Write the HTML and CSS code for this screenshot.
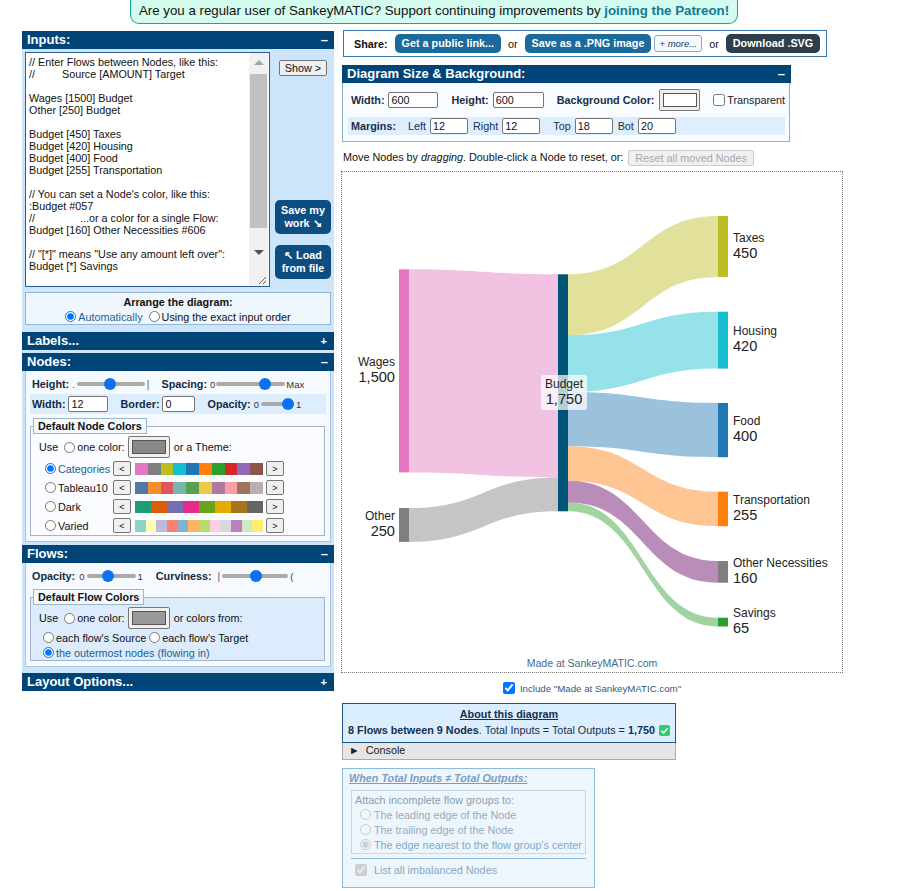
FILE: index.html
```html
<!DOCTYPE html>
<html lang="en">
<head>
<meta charset="utf-8">
<title>SankeyMATIC</title>
<link rel="stylesheet" href="styles.css">
</head>
<body>
<div class="page">
  <div class="banner">Are you a regular user of SankeyMATIC? Support continuing improvements by <a class="patreon" href="#">joining the Patreon!</a></div>
  <div class="main">
    <div class="left">
      <section class="sec">
        <div class="hdr"><span>Inputs:</span><span class="tog">–</span></div>
        <div class="inputs-body">
          <div class="inputs-row">
            <div class="ta">
              <div class="ta-text">// Enter Flows between Nodes, like this:
//         Source [AMOUNT] Target

Wages [1500] Budget
Other [250] Budget

Budget [450] Taxes
Budget [420] Housing
Budget [400] Food
Budget [255] Transportation

// You can set a Node's color, like this:
:Budget #057
//               ...or a color for a single Flow:
Budget [160] Other Necessities #606

// "[*]" means "Use any amount left over":
Budget [*] Savings</div>
              <div class="sb">
                <span class="sb-btn"><span class="tri-up"></span></span>
                <span class="sb-thumb"></span>
                <span class="sb-fill"></span>
                <span class="sb-btn"><span class="tri-down"></span></span>
                <span class="sb-corner">
                  <svg width="10" height="10" viewBox="0 0 10 10"><path d="M9 2 L2 9 M9 6 L6 9" stroke="#666" stroke-width="1" fill="none"/></svg>
                </span>
              </div>
            </div>
            <div class="ta-side">
              <button class="btn-show">Show &gt;</button>
              <span class="side-fill"></span>
              <button class="btn-dark">Save my<br>work ↘</button>
              <button class="btn-dark">↖ Load<br>from file</button>
            </div>
          </div>
          <div class="arrange">
            <div class="arrange-title">Arrange the diagram:</div>
            <div class="arrange-opts">
              <label class="opt sel"><input class="rad" type="radio" name="arr" checked>Automatically</label>
              <label class="opt"><input class="rad" type="radio" name="arr">Using the exact input order</label>
            </div>
          </div>
        </div>
      </section>

      <section class="sec">
        <div class="hdr"><span>Labels...</span><span class="tog plus">+</span></div>
      </section>

      <section class="sec">
        <div class="hdr"><span>Nodes:</span><span class="tog">–</span></div>
        <div class="box nodes-box">
          <div class="nrow">
            <b class="lbl">Height:</b><span class="tiny dot">.</span>
            <input class="rng w68" type="range" min="0" max="100" value="48">
            <span class="tiny bar">|</span>
            <b class="lbl ml12">Spacing:</b><span class="tiny ml3">0</span>
            <input class="rng w69 tight" type="range" min="0" max="100" value="74">
            <span class="tiny">Max</span>
          </div>
          <div class="strip">
            <b class="lbl">Width:</b><input class="txt w40" type="text" value="12">
            <b class="lbl ml12">Border:</b><input class="txt w33" type="text" value="0">
            <b class="lbl ml12">Opacity:</b><span class="tiny ml3">0</span>
            <input class="rng w33" type="range" min="0" max="100" value="100">
            <span class="tiny">1</span>
          </div>
          <fieldset class="fs fs-nodes">
            <legend>Default Node Colors</legend>
            <div class="use-row">
              <span>Use</span>
              <label class="opt ml6"><input class="rad" type="radio" name="nc">one color:</label>
              <span class="swatch-btn"><span class="swatch-in"></span></span>
              <span>or a Theme:</span>
            </div>
            <div class="theme">
              <label class="opt tname sel"><input class="rad" type="radio" name="nc" checked>Categories</label>
              <span class="arr-btn">&lt;</span>
              <span class="strip-c">
                <i style="background:#e377c2"></i><i style="background:#7f7f7f"></i><i style="background:#bcbd22"></i><i style="background:#17becf"></i><i style="background:#1f77b4"></i><i style="background:#ff7f0e"></i><i style="background:#2ca02c"></i><i style="background:#d62728"></i><i style="background:#9467bd"></i><i style="background:#8c564b"></i>
              </span>
              <span class="arr-btn">&gt;</span>
            </div>
            <div class="theme">
              <label class="opt tname"><input class="rad" type="radio" name="nc">Tableau10</label>
              <span class="arr-btn">&lt;</span>
              <span class="strip-c">
                <i style="background:#4e79a7"></i><i style="background:#f28e2c"></i><i style="background:#e15759"></i><i style="background:#76b7b2"></i><i style="background:#59a14f"></i><i style="background:#edc949"></i><i style="background:#af7aa1"></i><i style="background:#ff9da7"></i><i style="background:#9c755f"></i><i style="background:#bab0ab"></i>
              </span>
              <span class="arr-btn">&gt;</span>
            </div>
            <div class="theme">
              <label class="opt tname"><input class="rad" type="radio" name="nc">Dark</label>
              <span class="arr-btn">&lt;</span>
              <span class="strip-c">
                <i style="background:#1b9e77"></i><i style="background:#d95f02"></i><i style="background:#7570b3"></i><i style="background:#e7298a"></i><i style="background:#66a61e"></i><i style="background:#e6ab02"></i><i style="background:#a6761d"></i><i style="background:#666666"></i>
              </span>
              <span class="arr-btn">&gt;</span>
            </div>
            <div class="theme">
              <label class="opt tname"><input class="rad" type="radio" name="nc">Varied</label>
              <span class="arr-btn">&lt;</span>
              <span class="strip-c">
                <i style="background:#8dd3c7"></i><i style="background:#ffffb3"></i><i style="background:#bebada"></i><i style="background:#fb8072"></i><i style="background:#80b1d3"></i><i style="background:#fdb462"></i><i style="background:#b3de69"></i><i style="background:#fccde5"></i><i style="background:#d9d9d9"></i><i style="background:#bc80bd"></i><i style="background:#ccebc5"></i><i style="background:#ffed6f"></i>
              </span>
              <span class="arr-btn">&gt;</span>
            </div>
          </fieldset>
        </div>
      </section>

      <section class="sec">
        <div class="hdr"><span>Flows:</span><span class="tog">–</span></div>
        <div class="box flows-box">
          <div class="nrow">
            <b class="lbl">Opacity:</b><span class="tiny ml4">0</span>
            <input class="rng w49" type="range" min="0" max="100" value="43">
            <span class="tiny">1</span>
            <b class="lbl ml13">Curviness:</b><span class="tiny bar ml6">|</span>
            <input class="rng w66" type="range" min="0" max="100" value="52">
            <span class="tiny">(</span>
          </div>
          <fieldset class="fs fs-flows">
            <legend>Default Flow Colors</legend>
            <div class="use-row">
              <span>Use</span>
              <label class="opt ml6"><input class="rad" type="radio" name="fc">one color:</label>
              <span class="swatch-btn"><span class="swatch-in lite"></span></span>
              <span>or colors from:</span>
            </div>
            <div class="frow">
              <label class="opt"><input class="rad" type="radio" name="fc">each flow's Source</label>
              <label class="opt ml3"><input class="rad" type="radio" name="fc">each flow's Target</label>
            </div>
            <div class="frow">
              <label class="opt sel"><input class="rad" type="radio" name="fc" checked>the outermost nodes (flowing in)</label>
            </div>
          </fieldset>
        </div>
      </section>

      <section class="sec">
        <div class="hdr"><span>Layout Options...</span><span class="tog plus">+</span></div>
      </section>
    </div>

    <div class="right">
      <div class="share">
        <b class="share-lbl">Share:</b>
        <span class="pill blue">Get a public link...</span>
        <span class="or">or</span>
        <span class="pill blue">Save as a .PNG image</span>
        <span class="more">+ <i>more...</i></span>
        <span class="or">or</span>
        <span class="pill slate">Download .SVG</span>
      </div>

      <section class="dsize">
        <div class="hdr"><span>Diagram Size &amp; Background:</span><span class="tog">–</span></div>
        <div class="dbody">
          <div class="drow">
            <b class="dl">Width:</b><input class="txt w50" type="text" value="600">
            <b class="dl ml13">Height:</b><input class="txt w51" type="text" value="600">
            <b class="dl ml13">Background Color:</b>
            <span class="swatch-btn bgc"><span class="swatch-in white"></span></span>
            <label class="chk-lbl ml13"><input class="chk" type="checkbox">Transparent</label>
          </div>
          <div class="mrow">
            <b class="dl">Margins:</b>
            <span class="ml12">Left</span><input class="txt w38" type="text" value="12">
            <span class="ml5">Right</span><input class="txt w38" type="text" value="12">
            <span class="ml13">Top</span><input class="txt w38" type="text" value="18">
            <span class="ml5">Bot</span><input class="txt w38" type="text" value="20">
          </div>
        </div>
      </section>

      <div class="move">Move Nodes by <i>dragging</i>. Double-click a Node to reset, or: <span class="reset">Reset all moved Nodes</span></div>

      <div class="chart">
        <svg width="500" height="500" viewBox="342 171 500 500">
          <g class="flows">
            <path fill="#e377c2" d="M409,268.3 C483.5,268.3 483.5,273.3 558,273.3 L558,476.4 C483.5,476.4 483.5,471.4 409,471.4 Z"/>
            <path fill="#7f7f7f" d="M409,507 C483.5,507 483.5,476.4 558,476.4 L558,510.3 C483.5,510.3 483.5,540.9 409,540.9 Z"/>
            <path fill="#bcbd22" d="M568,273.3 C643,273.3 643,215 718,215 L718,275.9 C643,275.9 643,334.2 568,334.2 Z"/>
            <path fill="#17becf" d="M568,334.2 C643,334.2 643,310.7 718,310.7 L718,367.6 C643,367.6 643,391.1 568,391.1 Z"/>
            <path fill="#1f77b4" d="M568,391.1 C643,391.1 643,402 718,402 L718,456.2 C643,456.2 643,445.3 568,445.3 Z"/>
            <path fill="#ff7f0e" d="M568,445.3 C643,445.3 643,490.7 718,490.7 L718,525.2 C643,525.2 643,479.8 568,479.8 Z"/>
            <path fill="#660066" d="M568,479.8 C643,479.8 643,560 718,560 L718,581.7 C643,581.7 643,501.5 568,501.5 Z"/>
            <path fill="#2ca02c" d="M568,501.5 C643,501.5 643,616.7 718,616.7 L718,625.5 C643,625.5 643,510.3 568,510.3 Z"/>
          </g>
          <rect x="399" y="268.3" width="10" height="203.1" fill="#e377c2"/>
          <rect x="399" y="507" width="10" height="33.9" fill="#7f7f7f"/>
          <rect x="558" y="273.3" width="10" height="237" fill="#005577"/>
          <rect x="718" y="215" width="10" height="60.9" fill="#bcbd22"/>
          <rect x="718" y="310.7" width="10" height="56.9" fill="#17becf"/>
          <rect x="718" y="402" width="10" height="54.2" fill="#1f77b4"/>
          <rect x="718" y="490.7" width="10" height="34.5" fill="#ff7f0e"/>
          <rect x="718" y="560" width="10" height="21.7" fill="#7f7f7f"/>
          <rect x="718" y="616.7" width="10" height="8.8" fill="#2ca02c"/>
          <rect x="541" y="374" width="46" height="35" rx="3" fill="#ffffff" fill-opacity="0.72"/>
          <g class="lab">
            <text x="395" y="364.5" text-anchor="end">Wages</text>
            <text class="val" x="395" y="380.5" text-anchor="end">1,500</text>
            <text x="395" y="519" text-anchor="end">Other</text>
            <text class="val" x="395" y="535" text-anchor="end">250</text>
            <text x="564" y="387" text-anchor="middle">Budget</text>
            <text class="val" x="564" y="403" text-anchor="middle">1,750</text>
            <text x="733" y="240.5">Taxes</text>
            <text class="val" x="733" y="256.5">450</text>
            <text x="733" y="334">Housing</text>
            <text class="val" x="733" y="350">420</text>
            <text x="733" y="424">Food</text>
            <text class="val" x="733" y="440">400</text>
            <text x="733" y="503">Transportation</text>
            <text class="val" x="733" y="519">255</text>
            <text x="733" y="566">Other Necessities</text>
            <text class="val" x="733" y="582">160</text>
            <text x="733" y="616">Savings</text>
            <text class="val" x="733" y="632">65</text>
          </g>
          <text class="made" x="592" y="666" text-anchor="middle">Made at SankeyMATIC.com</text>
        </svg>
      </div>

      <div class="include"><label class="inc-lbl"><input class="chk" type="checkbox" checked>Include "Made at SankeyMATIC.com"</label></div>

      <div class="about">
        <div class="about-title">About this diagram</div>
        <div class="about-line"><b>8 Flows between 9 Nodes</b>. Total Inputs = Total Outputs = <b>1,750</b> <span class="ok"><svg width="9" height="9" viewBox="0 0 9 9"><path d="M1.5 4.8 L3.6 6.8 L7.6 2.3" stroke="#fff" stroke-width="1.6" fill="none"/></svg></span></div>
      </div>
      <div class="console">► &nbsp;Console</div>

      <div class="when">
        <div class="when-title">When Total Inputs ≠ Total Outputs:</div>
        <div class="when-box">
          <div class="wl">Attach incomplete flow groups to:</div>
          <label class="wl wopt"><input class="rad" type="radio" name="att" disabled>The leading edge of the Node</label>
          <label class="wl wopt"><input class="rad" type="radio" name="att" disabled>The trailing edge of the Node</label>
          <label class="wl wopt wsel"><input class="rad" type="radio" name="att" checked disabled>The edge nearest to the flow group's center</label>
        </div>
        <div class="when-hr"></div>
        <label class="wl wchk"><input class="chk" type="checkbox" checked disabled>List all imbalanced Nodes</label>
      </div>
    </div>
  </div>
</div>
</body>
</html>
```

FILE: styles.css
```css
* { box-sizing: border-box; }
body {
  margin: 0;
  font-family: "Liberation Sans", Arial, sans-serif;
  font-size: 10.8px;
  color: #111;
  background: #fff;
}
.page { width: 824px; margin-left: 22px; }

/* banner */
.banner {
  width: max-content;
  margin: 0 auto;
  background: #d3fcee;
  border: 1px solid #19a88e;
  border-top: none;
  border-radius: 0 0 9px 9px;
  padding: 3px 8px 4px;
  font-size: 13.3px;
  line-height: 16px;
  color: #111;
}
.patreon { color: #13799a; font-weight: bold; text-decoration: none; }

.main { display: flex; gap: 7px; margin-top: 6px; align-items: flex-start; }

/* left column */
.left {
  width: 312px;
  margin-top: 1px;
  background: #cde5fb;
  display: flex;
  flex-direction: column;
  gap: 3px;
}
.hdr {
  background: #004478;
  color: #fff;
  font-weight: bold;
  font-size: 13px;
  height: 18px;
  line-height: 18px;
  padding: 0 6px 0 5px;
  display: flex;
  justify-content: space-between;
}
.tog { font-weight: bold; }
.tog.plus { font-size: 11px; padding-right: 1px; }

.inputs-body { padding: 3px 3px 4px 3px; }
.inputs-row { display: flex; }
.ta {
  width: 245px;
  height: 235px;
  border: 1px solid #2c5d89;
  background: #fff;
  display: flex;
}
.ta-text {
  flex: 1;
  white-space: pre;
  overflow: hidden;
  padding: 3px 3px;
  line-height: 12px;
  font-size: 10.8px;
  color: #111;
}
.sb {
  width: 19px;
  margin-right: 1px;
  background: #f1f1f1;
  display: flex;
  flex-direction: column;
  align-items: center;
}
.sb-btn { height: 19px; width: 19px; display: flex; align-items: center; justify-content: center; }
.tri-up { width: 0; height: 0; border-left: 5px solid transparent; border-right: 5px solid transparent; border-bottom: 5px solid #a3a3a3; }
.tri-down { width: 0; height: 0; border-left: 5px solid transparent; border-right: 5px solid transparent; border-top: 5px solid #505050; }
.sb-thumb { width: 17px; height: 154px; margin-top: 2px; background: #c1c1c1; }
.sb-fill { flex: 1; }
.sb-corner { height: 24px; width: 19px; display: flex; align-items: flex-end; justify-content: flex-end; padding: 0 1px 1px 0; }

.ta-side {
  width: 56px;
  margin-left: 5px;
  display: flex;
  flex-direction: column;
  align-items: center;
  padding: 8px 0 8px;
}
.side-fill { flex: 1; }
.btn-show {
  width: 48px; height: 16px;
  font: 10.8px "Liberation Sans", Arial, sans-serif;
  color: #111;
  background: #efefef;
  border: 1px solid #767676;
  border-radius: 2px;
  padding: 0;
}
.btn-dark {
  width: 56px;
  height: 34px;
  background: #0e4d80;
  color: #fff;
  border: none;
  border-radius: 5px;
  font: bold 10.8px/13px "Liberation Sans", Arial, sans-serif;
  padding: 0;
}
.btn-dark + .btn-dark { margin-top: 11px; }

.arrange {
  margin-top: 5px;
  height: 33px;
  background: #eef6fe;
  border: 1px solid #98b4d4;
  padding-top: 2px;
}
.arrange-title { font-weight: bold; line-height: 14px; height: 14px; color: #111; text-align: center; }
.arrange-opts { display: flex; justify-content: center; align-items: center; height: 15px; gap: 6px; }
.opt { display: inline-flex; align-items: center; white-space: nowrap; }
.opt.sel { color: #1a6293; }
.rad {
  width: 11px; height: 11px;
  margin: 0 2px 0 0;
}

/* boxes */
.box {
  margin: 0 3px;
  background: #f6faff;
  border: 1px solid #a7c3e0;
  border-top: none;
}
.nodes-box { padding-top: 4px; margin-bottom: 0; }
.flows-box { padding-top: 4px; margin-bottom: 3px; }
.nrow { display: flex; align-items: center; height: 18px; padding-left: 6px; white-space: nowrap; }
.lbl { font-weight: bold; color: #142a40; }
.tiny { font-size: 9.5px; color: #333; }
.dot { margin-left: 3px; }
.bar { font-size: 10px; color: #555; }
.ml3 { margin-left: 3px; }
.ml4 { margin-left: 4px; }
.ml5 { margin-left: 5px; }
.ml6 { margin-left: 6px; }
.ml8 { margin-left: 8px; }
.ml12 { margin-left: 12px; }
.ml13 { margin-left: 13px; }
.ml14 { margin-left: 14px; }
.ml16 { margin-left: 16px; }

.rng {
  -webkit-appearance: none;
  appearance: none;
  height: 12px;
  background: transparent;
  margin: 0 2px;
  padding: 0;
}
.rng.tight { margin: 0 1px; }
.rng::-webkit-slider-runnable-track { height: 4px; background: #aaa; border-radius: 2px; }
.rng::-webkit-slider-thumb {
  -webkit-appearance: none;
  width: 12px; height: 12px;
  border-radius: 50%;
  background: #0b72f3;
  margin-top: -4px;
  border: none;
}
.w68 { width: 68px; }
.w69 { width: 69px; }
.w33 { width: 33px; }
.w49 { width: 49px; }
.w66 { width: 66px; }
.w40 { width: 40px; }
.w50 { width: 50px; }
.w51 { width: 51px; }
.w38 { width: 38px; }

.strip {
  display: flex;
  align-items: center;
  margin: 1px 4px 0;
  height: 20px;
  background: #ddeeff;
  padding-left: 2px;
  white-space: nowrap;
}
.txt {
  height: 16px;
  border: 1px solid #767676;
  border-radius: 2px;
  padding: 0 2px;
  font: 10.8px "Liberation Sans", Arial, sans-serif;
  color: #111;
  background: #fff;
  margin-left: 3px;
}

.fs {
  margin: 4px 5px 5px 4px;
  padding: 0 0 0 8px;
  border: 1px solid #9db5d3;
  min-width: 0;
}
.fs legend {
  margin-left: -6px;
  padding: 0 4px;
  height: 16px;
  line-height: 14px;
  border: 1px solid #9db5d3;
  font-weight: bold;
  color: #111;
  background: #f4f9ff;
}
.fs-nodes { background: #fafcff; }
.fs-flows { background: #dcecfc; margin: 4px 5px 5px 4px; }
.use-row { display: flex; align-items: center; height: 22px; margin: 2px 0 1px; white-space: nowrap; }
.use-row > span:last-child { margin-left: 4px; }
.swatch-btn {
  display: inline-flex;
  align-items: center;
  justify-content: center;
  width: 42px; height: 22px;
  background: #efefef;
  border: 1px solid #767676;
  border-radius: 2px;
  margin-left: 3px;
}
.swatch-in { width: 34px; height: 14px; background: #888; border: 1px solid #555; }
.swatch-in.lite { background: #999; }
.swatch-in.white { background: #fff; border-color: #555; }
.theme { display: flex; align-items: center; height: 19px; margin-left: 6px; }
.tname { width: 68px; }
.arr-btn {
  display: inline-flex; align-items: center; justify-content: center;
  width: 18px; height: 15px;
  background: #efefef;
  border: 1px solid #767676;
  border-radius: 2px;
  font-size: 9px;
  color: #111;
}
.strip-c { display: flex; width: 128px; height: 12px; margin: 0 3px 0 4px; }
.strip-c i { flex: 1; }
.frow { display: flex; align-items: center; height: 15px; margin-left: 4px; white-space: nowrap; }
.use-row + .frow { margin-top: 1px; }

/* right column */
.right { width: 502px; display: flex; flex-direction: column; align-items: flex-start; }
.share {
  margin-left: 2px;
  height: 27px;
  border: 1px solid #3b78aa;
  background: #fff;
  display: flex;
  align-items: center;
  padding: 0 6px 0 10px;
  white-space: nowrap;
}
.share-lbl { color: #111; margin-right: 7px; }
.pill {
  display: inline-block;
  height: 19px;
  line-height: 19px;
  padding: 0 7px;
  border-radius: 5px;
  color: #fff;
  font-weight: bold;
}
.pill.blue { background: #1c6a9b; }
.pill.slate { background: #2e3e4a; }
.or { margin: 0 7px; color: #111; }
.more {
  margin-left: 3px;
  height: 17px;
  line-height: 15px;
  padding: 0 4px;
  border: 1px solid #8aa8cc;
  border-radius: 3px;
  background: #f4f9ff;
  font-size: 9.5px;
  color: #1a3d5c;
}

.dsize { margin-top: 8px; margin-left: 1px; width: 449px; }
.dbody {
  width: 448px;
  background: #f8fbff;
  border: 1px solid #8db0d2;
  border-top: none;
  padding: 5px 4px 6px 5px;
}
.drow { display: flex; align-items: center; height: 24px; padding-left: 3px; white-space: nowrap; }
.dl { font-weight: bold; color: #1a2f48; white-space: nowrap; }
.drow .txt { margin-left: 4px; }
.bgc { margin-left: 5px; }
.chk-lbl { display: inline-flex; align-items: center; color: #222; }
.chk { width: 12px; height: 12px; margin: 0 2px 0 0; }
.mrow {
  display: flex; align-items: center;
  margin-top: 5px;
  height: 18px;
  background: #ddeeff;
  padding-left: 3px;
  color: #1a2f48;
  white-space: nowrap;
}
.mrow .txt { margin-left: 4px; }

.move { margin: 6px 0 0 2px; height: 18px; line-height: 18px; color: #111; white-space: nowrap; }
.reset {
  display: inline-block;
  margin-left: 2px;
  height: 16px; line-height: 14px;
  padding: 0 6px;
  border: 1px solid #ccc;
  border-radius: 2px;
  background: #f0f0f0;
  color: #a8a8a8;
  vertical-align: middle;
}

.chart {
  margin-top: 5px;
  width: 502px; height: 502px;
  border: 1px dotted #777;
  background: #fff;
}
.chart svg { display: block; }
.flows path { fill-opacity: 0.45; }
.lab text { font-family: "Liberation Sans", Arial, sans-serif; font-size: 12px; fill: #222; }
.lab text.val { font-size: 14.6px; }
.made { font-family: "Liberation Sans", Arial, sans-serif; font-size: 10.5px; fill: #3d6a8e; }

.include { width: 502px; margin-top: 8px; height: 14px; display: flex; justify-content: center; }
.inc-lbl { display: inline-flex; align-items: center; color: #2f5a80; font-size: 9.7px; white-space: nowrap; }
.inc-lbl .chk { margin-right: 5px; }

.about {
  margin-top: 8px;
  margin-left: 1px;
  width: 334px;
  height: 40px;
  background: #dbeeff;
  border: 1px solid #1b5687;
  text-align: center;
  padding-top: 3px;
  color: #14304d;
}
.about-title { font-weight: bold; text-decoration: underline; line-height: 15px; }
.about-line { line-height: 16px; display: flex; justify-content: center; align-items: center; white-space: pre; }
.ok {
  display: inline-flex; align-items: center; justify-content: center;
  width: 11px; height: 11px; border-radius: 2px;
  background: #2fcc6a;
  margin-left: 4px;
}
.console {
  margin-left: 1px;
  width: 334px;
  height: 17px;
  line-height: 15px;
  background: #e6e6e6;
  border: 1px solid #aaa;
  border-top: none;
  padding-left: 6px;
  color: #222;
}

.when {
  margin-top: 8px;
  margin-left: 1px;
  width: 253px;
  height: 120px;
  background: #eef6fd;
  border: 1px solid #8fbbd9;
  padding: 2px 0 0 0;
}
.when-title {
  padding-left: 6px;
  line-height: 15px;
  font-weight: bold;
  font-style: italic;
  text-decoration: underline;
  color: #7b9cbb;
  white-space: nowrap;
}
.when-box {
  margin: 4px 0 0 8px;
  width: 235px;
  border: 1px solid #c9d7e5;
  padding: 1px 0 1px 3px;
}
.wl { display: flex; align-items: center; height: 15px; color: #8a9db0; white-space: nowrap; }
.wopt { padding-left: 5px; color: #9aaaba; }
.wopt .rad { margin-right: 3px; }
.wsel { color: #7fa8c9; }
.when-hr { margin: 4px 0 0 8px; width: 235px; height: 1px; background: #8fbbd9; }
.wchk { margin: 3px 0 0 12px; color: #8aa6c0; }
.wchk .chk { margin-right: 7px; }
```
